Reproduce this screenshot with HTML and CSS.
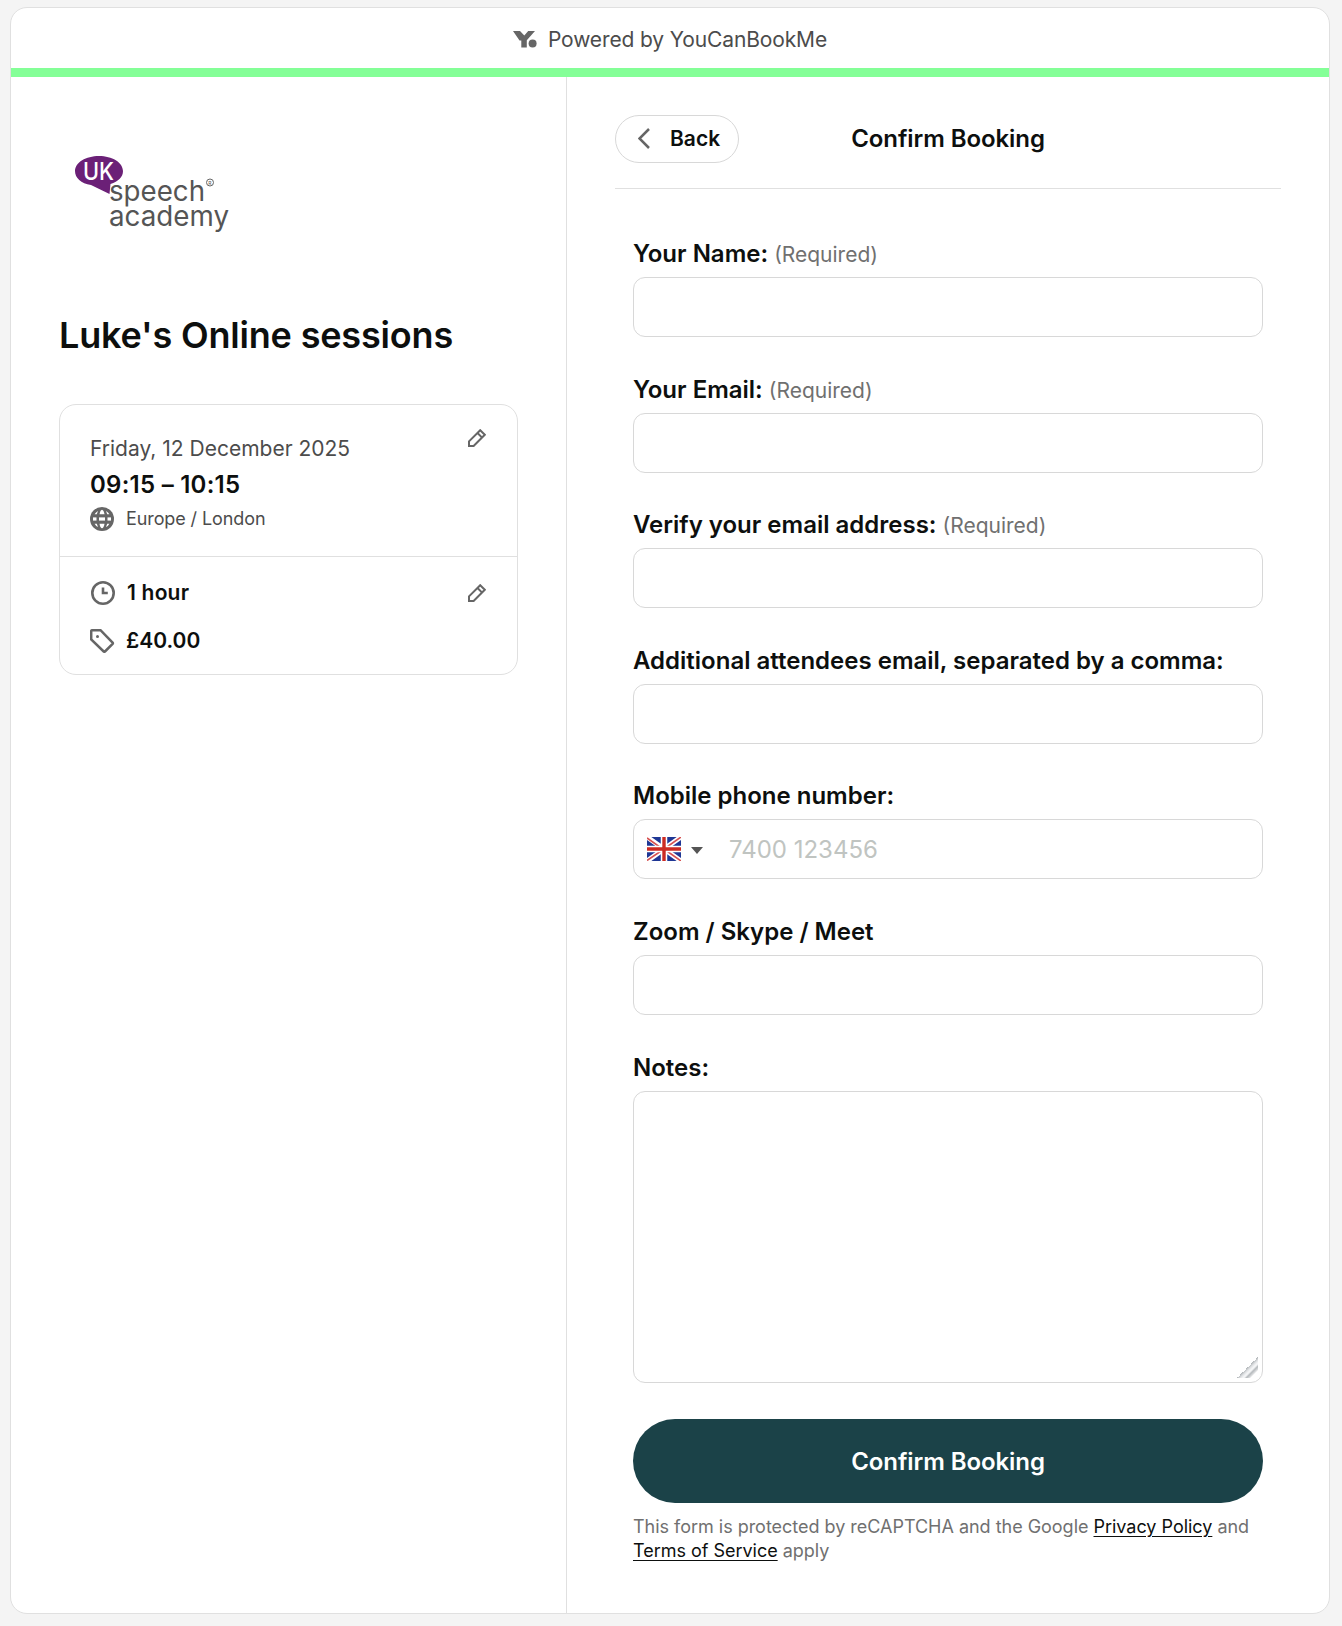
FILE: index.html
```html
<!DOCTYPE html>
<html lang="en">
<head>
    <meta charset="UTF-8">
    <meta name="viewport" content="width=device-width, initial-scale=1.0">
    <title>Confirm Booking</title>
    <link rel="stylesheet" href="styles.css">
</head>
<body>
    <div class="page">
        <div class="topbar">
            <svg class="brand-icon" width="24" height="17" viewBox="0 0 24 17">
                <path fill="#666" d="M0 0h7l4.300 4.600L15.200 0H22l-8.200 9.200V16.400H8.300V9.600H6.500z"/>
                <circle cx="19.600" cy="12.400" r="4.600" fill="#fff"/>
                <circle cx="19.600" cy="12.400" r="4" fill="#666"/>
            </svg>
            <span>Powered by YouCanBookMe</span>
        </div>
        <div class="content">
            <div class="sidebar">
                <svg class="logo" width="184" height="120" viewBox="0 0 184 120">
                    <path fill="#6b2077" d="M40 16c13 0 24 6.500 24 15 0 6-4.500 10.500-12.500 13L50.500 54 32 45C22 43.500 16 38 16 31c0-8.500 11-15 24-15z"/>
                    <text x="24" y="40" class="logo-uk" textLength="31" lengthAdjust="spacingAndGlyphs">UK</text>
                    <text x="50" y="61" class="logo-text" textLength="96" lengthAdjust="spacingAndGlyphs">speech</text>
                    <text x="50" y="86" class="logo-text" textLength="120" lengthAdjust="spacingAndGlyphs">academy</text>
                    <circle cx="151" cy="42.500" r="3.500" class="logo-ring"/>
                    <text x="149.300" y="44.500" class="logo-reg">R</text>
                </svg>
                <h1>Luke's Online sessions</h1>
                <div class="summary">
                    <div class="slot">
                        <div>
                            <div class="date">Friday, 12 December 2025</div>
                            <div class="time">09:15 – 10:15</div>
                            <div class="zone">
                                <svg width="24" height="24" viewBox="0 0 24 24">
                                    <circle cx="12" cy="12" r="12" fill="#666"/>
                                    <g fill="#fff">
                                        <path d="M9.500 7.300Q10.200 3 12 2.700Q13.800 3 14.500 7.300z"/>
                                        <path d="M9.500 16.700Q10.200 21 12 21.300Q13.800 21 14.500 16.700z"/>
                                        <path d="M9 10.400h6v3.200H9z"/>
                                        <path d="M3 10.400h3.500v3.200H3z"/>
                                        <path d="M17.500 10.400H21v3.200h-3.500z"/>
                                        <path d="M4.600 7.300Q5.800 5 8 3.900L6.800 7.300z"/>
                                        <path d="M19.400 7.300Q18.200 5 16 3.900L17.200 7.300z"/>
                                        <path d="M4.600 16.700Q5.800 19 8 20.100L6.800 16.700z"/>
                                        <path d="M19.400 16.700Q18.200 19 16 20.100L17.200 16.700z"/>
                                    </g>
                                </svg>
                                <span>Europe / London</span>
                            </div>
                        </div>
                        <svg class="edit" width="18" height="18" viewBox="0 0 18 18">
                            <path d="M1 12.400 12.200 1.200l4.600 4.600L5.600 17H1zM9.500 4l4.600 4.600"/>
                        </svg>
                    </div>
                    <div class="details">
                        <div>
                            <div class="detail">
                                <svg width="25" height="24" viewBox="0 0 25 24">
                                    <circle cx="13" cy="12" r="10.700" fill="none" stroke="#666" stroke-width="2.600"/>
                                    <path d="M13 6.500V12h4.800" fill="none" stroke="#666" stroke-width="2.600"/>
                                </svg>
                                <span class="duration">1 hour</span>
                            </div>
                            <div class="detail">
                                <svg width="25" height="24" viewBox="0 0 25 24">
                                    <path d="M1.200 2.200a1 1 0 0 1 1-1H10.500L22.600 13.600a1 1 0 0 1 0 1.300L15 22.500a1 1 0 0 1-1.300 0L1.200 10.500z" fill="none" stroke="#666" stroke-width="2.500"/>
                                    <circle cx="7.500" cy="7.500" r="1.500" fill="#666"/>
                                </svg>
                                <span>£40.00</span>
                            </div>
                        </div>
                        <svg class="edit" width="18" height="18" viewBox="0 0 18 18">
                            <path d="M1 12.400 12.200 1.200l4.600 4.600L5.600 17H1zM9.500 4l4.600 4.600"/>
                        </svg>
                    </div>
                </div>
            </div>
            <div class="main">
                <div class="header">
                    <button class="back-btn">
                        <svg width="12" height="21" viewBox="0 0 12 21">
                            <path d="M11 1 1.500 10.500 11 20" fill="none" stroke="#666" stroke-width="2.500"/>
                        </svg>
                        <span>Back</span>
                    </button>
                    <h2>Confirm Booking</h2>
                </div>
                <form class="form">
                    <div class="field">
                        <label for="name">Your Name: <span class="required">(Required)</span></label>
                        <input type="text" id="name">
                    </div>
                    <div class="field">
                        <label for="email">Your Email: <span class="required">(Required)</span></label>
                        <input type="text" id="email">
                    </div>
                    <div class="field">
                        <label for="verify">Verify your email address: <span class="required">(Required)</span></label>
                        <input type="text" id="verify">
                    </div>
                    <div class="field">
                        <label for="attendees">Additional attendees email, separated by a comma:</label>
                        <input type="text" id="attendees">
                    </div>
                    <div class="field">
                        <label for="phone">Mobile phone number:</label>
                        <div class="phone">
                            <svg width="34" height="24" viewBox="0 0 34 24">
                                <path fill="#1f3795" d="M0 0h34v24H0z"/>
                                <path stroke="#fff" stroke-width="5" d="M0 0l34 24M34 0 0 24"/>
                                <path stroke="#d65050" stroke-width="1.600" d="M0 1l17 12M34 0 17 12M17 12l17 12M0 23.500 17 12"/>
                                <path stroke="#fff" stroke-width="6.500" d="M17 0v24M0 12h34"/>
                                <path stroke="#cc2a22" stroke-width="3.400" d="M17 0v24M0 12h34"/>
                            </svg>
                            <span class="caret"></span>
                            <input type="text" id="phone" placeholder="7400 123456">
                        </div>
                    </div>
                    <div class="field">
                        <label for="meet">Zoom / Skype / Meet</label>
                        <input type="text" id="meet">
                    </div>
                    <div class="field">
                        <label for="notes">Notes:</label>
                        <div class="notes">
                            <textarea id="notes"></textarea>
                            <span class="grip"></span>
                        </div>
                    </div>
                    <button type="button" class="confirm-btn">Confirm Booking</button>
                    <p class="legal">This form is protected by reCAPTCHA and the Google <a href="#">Privacy Policy</a> and <a href="#">Terms of Service</a> apply</p>
                </form>
            </div>
        </div>
    </div>
</body>
</html>
```
FILE: styles.css
```css
* {
    box-sizing: border-box;
}
body {
    margin: 0;
    padding: 7px 12px 12px 10px;
    background: #f4f4f4;
    color: #0d0f0e;
    font-family: Inter, sans-serif;
}
h1, h2, p {
    margin: 0;
}
svg {
    display: block;
    flex: none;
}
.page {
    display: flex;
    flex-direction: column;
    height: 1607px;
    background: white;
    border: 1px solid #e0e0e0;
    border-radius: 17px;
    overflow: hidden;
}
.topbar {
    display: flex;
    align-items: center;
    justify-content: center;
    gap: 11px;
    height: 69px;
    padding-top: 2px;
    border-bottom: 9px solid #84ff97;
    color: #4c4c4c;
    font-size: 21px;
    letter-spacing: -0.13px;
}
.content {
    display: flex;
    flex: 1;
}
.sidebar {
    width: 556px;
    padding: 63px 48px 0;
    border-right: 1px solid #e0e0e0;
}
.logo-uk {
    fill: white;
    font: 500 24px Inter, sans-serif;
}
.logo-text {
    fill: #555;
    font: 28px Inter, sans-serif;
}
.logo-ring {
    fill: none;
    stroke: #666;
}
.logo-reg {
    fill: #555;
    font: 5px Inter, sans-serif;
}
h1 {
    margin-top: 54px;
    font-size: 36px;
    font-weight: 600;
    line-height: 43px;
    letter-spacing: -0.17px;
}
.summary {
    margin-top: 47px;
    border: 1px solid #e0e0e0;
    border-radius: 17px;
}
.slot, .details {
    display: flex;
    justify-content: space-between;
    padding: 24px 31px 0 30px;
}
.slot {
    height: 152px;
    padding-top: 30px;
    border-bottom: 1px solid #e0e0e0;
}
.edit {
    fill: none;
    stroke: #666;
    stroke-width: 2;
}
.slot .edit {
    margin-top: -6px;
}
.details .edit {
    margin-top: 3px;
}
.date {
    color: #4c4c4c;
    font-size: 21px;
    line-height: 28px;
}
.time {
    margin-top: 6px;
    font-size: 24px;
    font-weight: 600;
    line-height: 32px;
    letter-spacing: 0.25px;
}
.zone {
    display: flex;
    align-items: center;
    gap: 12px;
    margin-top: 6px;
    color: #4c4c4c;
    font-size: 18px;
    line-height: 24px;
    letter-spacing: -0.1px;
}
.details {
    height: 117px;
}
.detail {
    display: flex;
    align-items: center;
    gap: 11px;
    margin-bottom: 24px;
    font-size: 21px;
    font-weight: 600;
    line-height: 24px;
}
.duration {
    padding-left: 1px;
    letter-spacing: 0.2px;
}
.main {
    flex: 1;
    padding: 38px 48px 0;
}
.header {
    display: grid;
    grid-template-columns: 1fr auto 1fr;
    align-items: center;
    height: 74px;
    padding-bottom: 25px;
    border-bottom: 1px solid #e0e0e0;
}
.back-btn {
    display: flex;
    align-items: center;
    gap: 20px;
    width: 124px;
    height: 48px;
    padding: 0 0 2px 22px;
    background: white;
    border: 1px solid #d8d8d8;
    border-radius: 24px;
    color: #0d0f0e;
    font: 600 21px Inter, sans-serif;
}
h2 {
    padding-bottom: 2px;
    font-size: 24px;
    font-weight: 600;
    letter-spacing: -0.08px;
}
.form {
    padding: 49px 18px 0;
}
.field {
    display: flex;
    flex-direction: column;
    gap: 7px;
    margin-bottom: 36.6px;
}
label {
    font-size: 24px;
    font-weight: 600;
    line-height: 32px;
}
.required {
    color: #707070;
    font-size: 21px;
    font-weight: 400;
    line-height: 1;
}
.field > input, .phone, textarea {
    width: 100%;
    height: 60px;
    background: white;
    border: 1px solid #d8d8d8;
    border-radius: 12px;
    font: 24px Inter, sans-serif;
}
.phone {
    display: flex;
    align-items: center;
    padding-left: 13px;
}
.caret {
    margin: 2px 26px 0 10px;
    border: 6px solid transparent;
    border-top: 7px solid #555;
    border-bottom: 0;
}
.phone input {
    flex: 1;
    padding: 0;
    border: 0;
    background: none;
    font: 24px Inter, sans-serif;
}
.phone input::placeholder {
    color: #c0c4c1;
}
.notes {
    position: relative;
    height: 292px;
}
textarea {
    display: block;
    height: 292px;
    resize: none;
}
.grip {
    position: absolute;
    right: 5px;
    bottom: 5px;
    width: 21px;
    height: 21px;
    background: linear-gradient(135deg, transparent 50%, #b5b9bc 50%, #dfe1e3 57%, #f4f5f6 63%, #f4f5f6 66%, #b5b9bc 72%, #e3e4e6 80%, transparent 82%);
}
.confirm-btn {
    display: block;
    width: 100%;
    height: 84px;
    background: #1b4248;
    border: 0;
    border-radius: 42px;
    color: white;
    font: 600 24px Inter, sans-serif;
    letter-spacing: -0.08px;
}
.legal {
    margin-top: 12px;
    color: #707070;
    font-size: 18px;
    line-height: 24px;
    letter-spacing: -0.02px;
}
.legal a {
    color: #0d0f0e;
    text-underline-offset: 3px;
}
```
